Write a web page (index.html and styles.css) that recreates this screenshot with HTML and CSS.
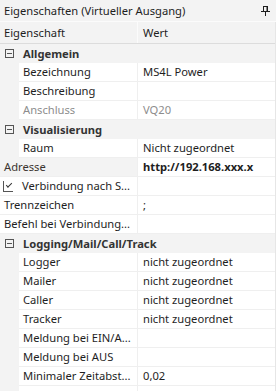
FILE: index.html
```html
<!DOCTYPE html>
<html lang="de">
<head>
    <meta charset="UTF-8">
    <title>Eigenschaften</title>
    <link rel="stylesheet" href="styles.css">
</head>
<body>

<div class="panel">
    <div class="titlebar">
        <span>Eigenschaften (Virtueller Ausgang)</span>
        <svg class="pin" width="9" height="10" viewBox="0 0 9 10">
            <path d="M2 0.5H7M2.5 0.5V5M6.5 0.5V5M0 5.5H9M4.5 6V10" stroke="#1e1e1e" stroke-width="1" fill="none"/>
            <rect x="5.5" y="0.5" width="1.5" height="5" fill="#1e1e1e"/>
        </svg>
    </div>

    <div class="grid">
        <div class="row head">
            <div class="name">Eigenschaft</div>
            <div class="value">Wert</div>
        </div>

        <div class="row cat">
            <span class="toggle"></span>
            <span>Allgemein</span>
        </div>
        <div class="row">
            <div class="indent"></div>
            <div class="name">Bezeichnung</div>
            <div class="value">MS4L Power</div>
        </div>
        <div class="row">
            <div class="indent"></div>
            <div class="name">Beschreibung</div>
            <div class="value"></div>
        </div>
        <div class="row disabled">
            <div class="indent"></div>
            <div class="name">Anschluss</div>
            <div class="value">VQ20</div>
        </div>

        <div class="row cat">
            <span class="toggle"></span>
            <span>Visualisierung</span>
        </div>
        <div class="row">
            <div class="indent"></div>
            <div class="name">Raum</div>
            <div class="value">Nicht zugeordnet</div>
        </div>

        <div class="row top selected">
            <div class="name">Adresse</div>
            <div class="value bold">http://192.168.xxx.x</div>
        </div>
        <div class="row top">
            <div class="name"><span class="check"></span>Verbindung nach S...</div>
            <div class="value"></div>
        </div>
        <div class="row top">
            <div class="name">Trennzeichen</div>
            <div class="value">;</div>
        </div>
        <div class="row top">
            <div class="name">Befehl bei Verbindung...</div>
            <div class="value"></div>
        </div>

        <div class="row cat">
            <span class="toggle"></span>
            <span>Logging/Mail/Call/Track</span>
        </div>
        <div class="row">
            <div class="indent"></div>
            <div class="name">Logger</div>
            <div class="value">nicht zugeordnet</div>
        </div>
        <div class="row">
            <div class="indent"></div>
            <div class="name">Mailer</div>
            <div class="value">nicht zugeordnet</div>
        </div>
        <div class="row">
            <div class="indent"></div>
            <div class="name">Caller</div>
            <div class="value">nicht zugeordnet</div>
        </div>
        <div class="row">
            <div class="indent"></div>
            <div class="name">Tracker</div>
            <div class="value">nicht zugeordnet</div>
        </div>
        <div class="row">
            <div class="indent"></div>
            <div class="name">Meldung bei EIN/A...</div>
            <div class="value"></div>
        </div>
        <div class="row">
            <div class="indent"></div>
            <div class="name">Meldung bei AUS</div>
            <div class="value"></div>
        </div>
        <div class="row">
            <div class="indent"></div>
            <div class="name">Minimaler Zeitabst...</div>
            <div class="value">0,02</div>
        </div>
        <div class="row">
            <div class="indent"></div>
            <div class="name"></div>
            <div class="value"></div>
        </div>
    </div>
</div>

</body>
</html>
```

FILE: styles.css
```css
body {
    margin: 0;
    padding: 0;
    font-family: "Noto Sans", "Open Sans", sans-serif;
    font-size: 11.2px;
    color: #1e1e1e;
    background: #f3f3f3;
}
.panel {
    width: 276px;
    height: 391px;
    overflow: hidden;
    background: #f3f3f3;
}
.titlebar {
    height: 22px;
    display: flex;
    align-items: center;
    justify-content: space-between;
    padding: 0 6px 0 4px;
    box-sizing: border-box;
    border-bottom: 1px solid #fbfbfb;
}
.pin {
    margin-top: 1px;
}
.grid {
    border-right: 1px solid #e6e6e6;
}
.row {
    display: flex;
    height: 19px;
    line-height: 18px;
}
.row .name,
.row .value {
    height: 18px;
    border-bottom: 1px solid #efefef;
    background: #fff;
    white-space: nowrap;
    overflow: hidden;
}
.row .name {
    width: 114px;
    padding-left: 4px;
    border-right: 1px solid #efefef;
}
.row.top .name {
    width: 133px;
    padding-left: 4px;
}
.row .value {
    flex: 1;
    padding-left: 5px;
}
.indent {
    width: 19px;
    background: #f3f3f3;
}
.row.head {
    height: 21px;
    line-height: 21px;
    border-bottom: 1px solid #dcdcdc;
}
.row.head .name,
.row.head .value {
    height: 21px;
    background: #f3f3f3;
    border-bottom: none;
}
.row.head .name {
    width: 133px;
    border-right: 1px solid #fbfbfb;
}
.row.cat {
    align-items: center;
    font-weight: bold;
    background: #f3f3f3;
    color: #333;
}
.toggle {
    width: 7px;
    height: 7px;
    border: 1px solid #555;
    margin: 0 9px 0 5px;
    position: relative;
}
.toggle::after {
    content: "";
    position: absolute;
    left: 1px;
    top: 3px;
    width: 5px;
    height: 1px;
    background: #555;
}
.disabled .name,
.disabled .value {
    color: #8d8d8d;
}
.row.selected .name {
    background: #f3f3f3;
    color: #3c3530;
}
.bold {
    font-weight: bold;
}
.check {
    display: inline-block;
    width: 9px;
    height: 10px;
    border-left: 1px solid #555;
    border-bottom: 1px solid #555;
    margin: 0 9px 0 -1px;
    vertical-align: -2px;
    position: relative;
}
.check::after {
    content: "";
    position: absolute;
    left: 2px;
    top: 2px;
    width: 5px;
    height: 2px;
    border-left: 1px solid #333;
    border-bottom: 1px solid #333;
    transform: rotate(-45deg);
}
```
